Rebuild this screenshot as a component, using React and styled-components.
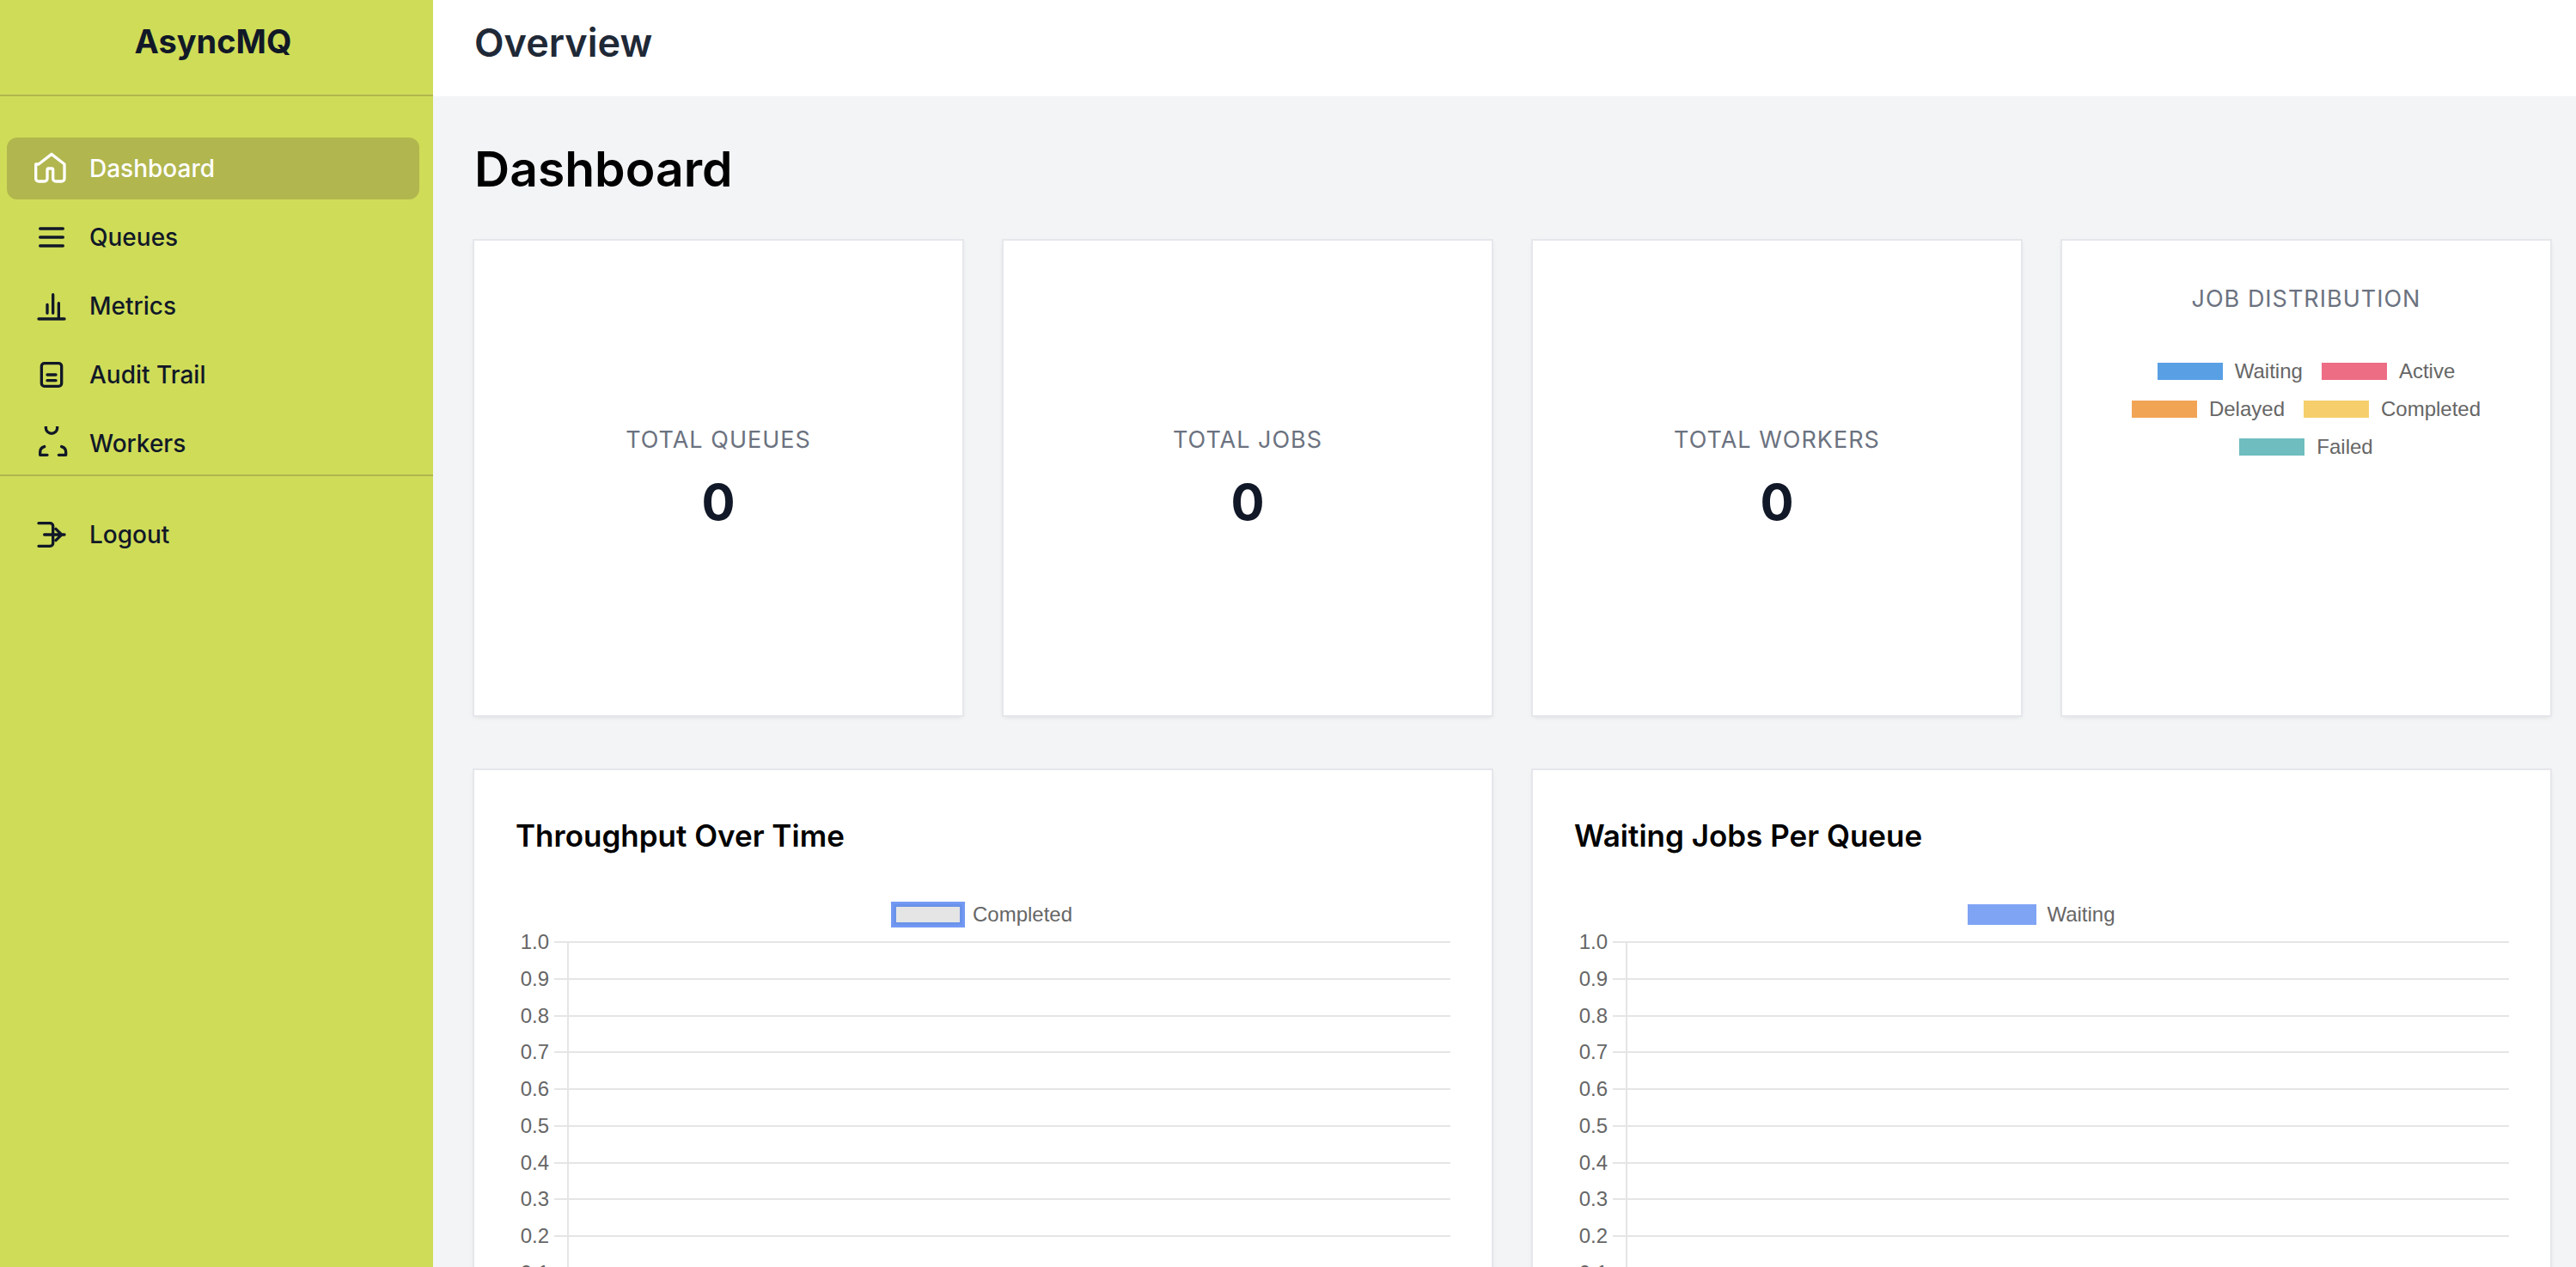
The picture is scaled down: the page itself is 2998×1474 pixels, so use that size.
import React from 'react'
import styled, { createGlobalStyle } from 'styled-components'


const navItems = [
  {
    name: 'Dashboard',
    active: true,
    path: 'M3 9l9-7 9 7v10a2 2 0 01-2 2h-4a2 2 0 01-2-2v-6a1 1 0 00-1-1h-2a1 1 0 00-1 1v6a2 2 0 01-2 2H3a2 2 0 01-2-2V9z',
  },
  { name: 'Queues', path: 'M4 6h16M4 12h16M4 18h16' },
  { name: 'Metrics', path: 'M3 21h18M9 17v-6M13 17V4M17 21V10' },
  {
    name: 'Audit Trail',
    path: 'M9 12h6M9 16h6M7 4h10a2 2 0 012 2v12a2 2 0 01-2 2H7a2 2 0 01-2-2V6a2 2 0 012-2z',
  },
  {
    name: 'Workers',
    path: 'M17 20h5v-2a4 4 0 00-3-3.87M9 20H4v-2a4 4 0 013-3.87M12 5a4 4 0 100-8 4 4 0 000 8z',
  },
]

const logoutPath = 'M15 16l4-4-4-4M21 12H7M3 4h8a2 2 0 012 2v12a2 2 0 01-2 2H3'

const totals = [
  { label: 'Total Queues', value: 0 },
  { label: 'Total Jobs', value: 0 },
  { label: 'Total Workers', value: 0 },
]

const jobStates = [
  { name: 'Waiting', color: '#589fe4' },
  { name: 'Active', color: '#ed6d85' },
  { name: 'Delayed', color: '#f2a455' },
  { name: 'Completed', color: '#f6cf6c' },
  { name: 'Failed', color: '#6fbdbf' },
]

const ticks = ['1.0', '0.9', '0.8', '0.7', '0.6', '0.5', '0.4', '0.3', '0.2', '0.1', '0']

const NavIcon = ({ path }) => (
  <Icon viewBox="0 0 24 24" aria-hidden="true">
    <path d={path} />
  </Icon>
)

const Chart = ({ title, series, outlined }) => (
  <ChartCard>
    <ChartTitle>{title}</ChartTitle>
    <ChartLegend>
      <ChartSwatch $outlined={outlined} />
      {series}
    </ChartLegend>
    <Plot role="img" aria-label={title}>
      {ticks.map((tick, i) => {
        const y = 16 + Math.round(i * 42.75)
        return (
          <g key={tick}>
            <text x="39" y={y + 8} textAnchor="end">{tick}</text>
            <line x1="45" x2="100%" y1={y} y2={y} />
          </g>
        )
      })}
      <line x1="61" x2="61" y1="16" y2="452" />
    </Plot>
  </ChartCard>
)

class App extends React.Component {

  render() {
    return (
      <Page>
        <GlobalStyle />
        <Sidebar>
          <Brand>AsyncMQ</Brand>
          <Nav>
            {navItems.map(item => (
              <NavLink key={item.name} href="#" $active={item.active}>
                <NavIcon path={item.path} />
                {item.name}
              </NavLink>
            ))}
          </Nav>
          <SidebarFooter>
            <NavLink href="#">
              <NavIcon path={logoutPath} />
              Logout
            </NavLink>
          </SidebarFooter>
        </Sidebar>
        <Content>
          <Header>
            <HeaderTitle>Overview</HeaderTitle>
          </Header>
          <Main>
            <PageTitle>Dashboard</PageTitle>
            <StatGrid>
              {totals.map(total => (
                <StatCard key={total.label}>
                  <StatLabel>{total.label}</StatLabel>
                  <StatValue>{total.value}</StatValue>
                </StatCard>
              ))}
              <DistributionCard>
                <StatLabel>Job Distribution</StatLabel>
                <Legend>
                  {jobStates.map(state => (
                    <LegendItem key={state.name}>
                      <Swatch $color={state.color} />
                      {state.name}
                    </LegendItem>
                  ))}
                </Legend>
              </DistributionCard>
            </StatGrid>
            <ChartGrid>
              <Chart title="Throughput Over Time" series="Completed" outlined />
              <Chart title="Waiting Jobs Per Queue" series="Waiting" />
            </ChartGrid>
          </Main>
        </Content>
      </Page>
    )
  }
}

const GlobalStyle = createGlobalStyle`
  * {
    box-sizing: border-box;
  }
  body, h1, h2, h3, p, ul {
    margin: 0;
    padding: 0;
  }
  body {
    font-family: Inter, "Liberation Sans", sans-serif;
    color: #000;
    background-color: #f3f4f6;
  }
`
const Page = styled.div`
  display: flex;
  height: 100vh;
  overflow: hidden;
`
const Sidebar = styled.aside`
  flex: none;
  width: 504px;
  background-color: #cfdc58;
  color: #111827;
`
const Brand = styled.div`
  height: 112px;
  padding: 20px 16px 0 8px;
  border-bottom: 2px solid #b1b64e;
  font-size: 38px;
  font-weight: 700;
  line-height: 56px;
  text-align: center;
`
const Nav = styled.nav`
  display: flex;
  flex-direction: column;
  gap: 8px;
  padding: 48px 16px 0 8px;
`
const NavLink = styled.a`
  display: flex;
  align-items: center;
  gap: 24px;
  height: 72px;
  padding: 0 32px;
  border-radius: 12px;
  font-size: 28px;
  font-weight: 500;
  line-height: 40px;
  text-decoration: none;
  color: ${props => props.$active ? "#fff" : "#111827"};
  background-color: ${props => props.$active ? "#b1b64e" : "transparent"};
`
const Icon = styled.svg`
  flex: none;
  width: 40px;
  height: 40px;
  fill: none;
  stroke: currentColor;
  stroke-width: 2;
  stroke-linecap: round;
  stroke-linejoin: round;
`
const SidebarFooter = styled.div`
  padding: 32px 16px 32px 8px;
  border-top: 2px solid #b1b64e;
`
const Content = styled.div`
  display: flex;
  flex-direction: column;
  flex: 1;
  min-width: 0;
`
const Header = styled.header`
  flex: none;
  height: 112px;
  padding: 18px 48px 0;
  background-color: #fff;
`
const HeaderTitle = styled.h1`
  font-size: 45px;
  font-weight: 600;
  line-height: 64px;
  color: #1f2937;
`
const Main = styled.main`
  flex: 1;
  min-height: 0;
  padding: 48px 30px 48px 48px;
  overflow-y: auto;
  scrollbar-width: none;
`
const PageTitle = styled.h2`
  margin-bottom: 46px;
  font-size: 57px;
  font-weight: 600;
  line-height: 74px;
`
const StatGrid = styled.section`
  display: grid;
  grid-template-columns: repeat(4, 1fr);
  gap: 48px;
  margin-bottom: 64px;
`
const Card = styled.div`
  background-color: #fff;
  box-shadow: 0 0 0 2px #e5e7eb, 0 2px 6px rgba(0, 0, 0, 0.1), 0 2px 4px -2px rgba(0, 0, 0, 0.1);
`
const StatCard = styled(Card)`
  display: flex;
  flex-direction: column;
  align-items: center;
  justify-content: center;
  gap: 16px;
  min-height: 552px;
`
const DistributionCard = styled(Card)`
  padding: 48px;
`
const StatLabel = styled.h3`
  font-size: 27px;
  font-weight: 400;
  line-height: 40px;
  letter-spacing: 1px;
  text-align: center;
  text-transform: uppercase;
  color: #6b7280;
`
const StatValue = styled.p`
  font-size: 58px;
  font-weight: 700;
  line-height: 72px;
  color: #111827;
`
const Legend = styled.ul`
  display: flex;
  flex-wrap: wrap;
  justify-content: center;
  column-gap: 22px;
  margin-top: 42px;
  list-style: none;
`
const LegendItem = styled.li`
  display: flex;
  align-items: center;
  gap: 14px;
  font-family: "Liberation Sans", Arial, sans-serif;
  font-size: 24px;
  line-height: 44px;
  color: #666;
`
const Swatch = styled.span`
  width: 76px;
  height: 20px;
  background-color: ${props => props.$color};
`
const ChartGrid = styled.section`
  display: grid;
  grid-template-columns: repeat(2, 1fr);
  gap: 48px;
`
const ChartCard = styled(Card)`
  padding: 48px;
`
const ChartTitle = styled.h3`
  font-size: 35px;
  font-weight: 600;
  line-height: 56px;
`
const ChartLegend = styled.div`
  display: flex;
  align-items: center;
  justify-content: center;
  gap: 12px;
  margin-top: 48px;
  font-family: "Liberation Sans", Arial, sans-serif;
  font-size: 24px;
  line-height: 32px;
  color: #666;
`
const ChartSwatch = styled.span`
  width: 80px;
  height: 24px;
  background-color: ${props => props.$outlined ? "#e5e5e5" : "#80a4f4"};
  border: ${props => props.$outlined ? "3px solid #6b93ea" : "none"};
  outline: ${props => props.$outlined ? "3px solid #7299f3" : "none"};
`
const Plot = styled.svg`
  display: block;
  width: 100%;
  height: 480px;
  font-family: "Liberation Sans", Arial, sans-serif;
  font-size: 24px;
  fill: #666;
  & line {
    stroke: #e5e5e5;
    stroke-width: 2;
  }
`


export default App;
